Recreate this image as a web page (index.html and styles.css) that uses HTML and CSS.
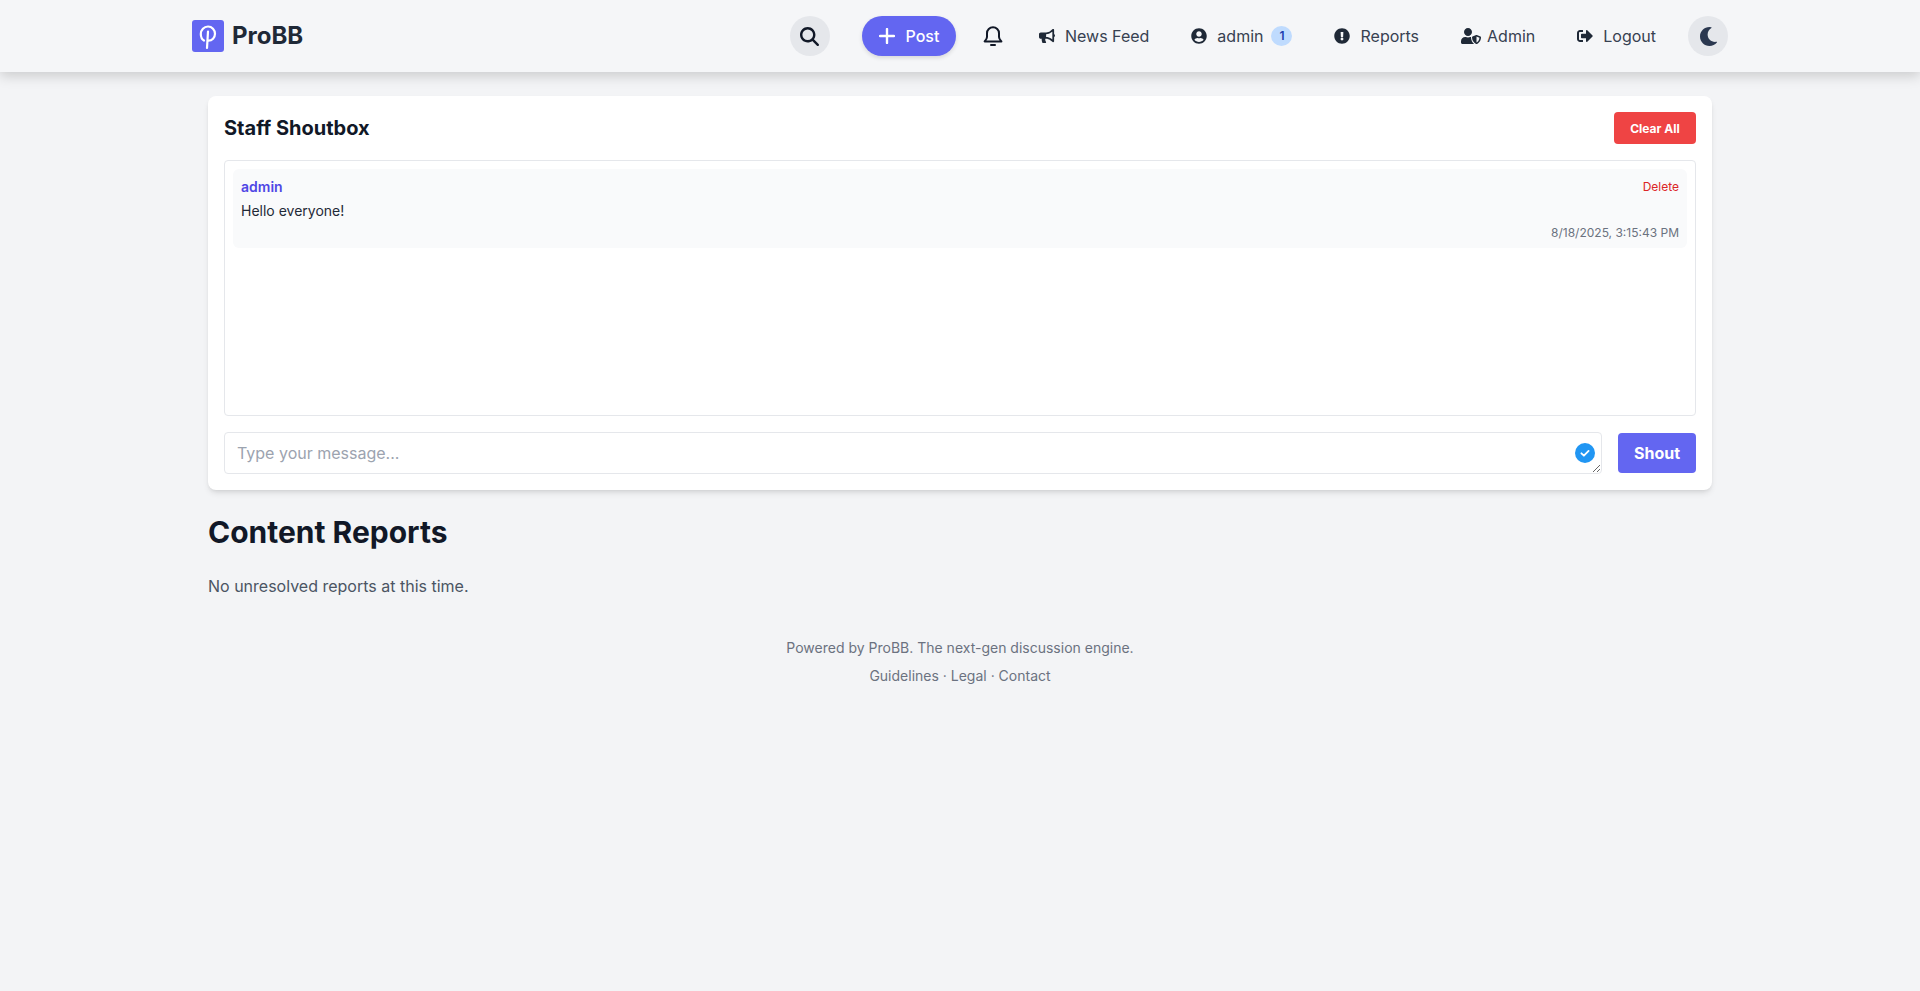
FILE: index.html
```html
<!DOCTYPE html>
<html lang="en">
<head>
<meta charset="utf-8">
<title>ProBB</title>
<link rel="stylesheet" href="styles.css">
</head>
<body>
<header class="site-header">
  <div class="header-inner">
    <a class="brand" href="#">
      <svg class="brand-mark" viewBox="0 0 32 32"><rect width="32" height="32" rx="3" fill="#6366f1"/><path d="M12 20.5C9.8 19.3 8.8 16.8 8.8 14C8.8 9.8 12 6.5 16 6.5C20 6.5 23 9.8 23 13.8C23 17.8 20 20.6 16.5 20.6M16 11.5L15 28" fill="none" stroke="#fff" stroke-width="2.2" stroke-linecap="round"/></svg>
      <span class="brand-name">ProBB</span>
    </a>
    <nav class="nav">
      <button class="round-btn search-btn"><svg class="ico-search" viewBox="0 0 512 512"><path d="M416 208c0 45.9-14.9 88.3-40 122.7L502.6 457.4c12.5 12.5 12.5 32.8 0 45.3s-32.8 12.5-45.3 0L330.7 376c-34.4 25.2-76.8 40-122.7 40C93.1 416 0 322.9 0 208S93.1 0 208 0S416 93.1 416 208zM208 352a144 144 0 1 0 0-288 144 144 0 1 0 0 288z"/></svg></button>
      <a class="post-btn" href="#"><svg class="ico-plus" viewBox="0 0 16 16"><path d="M8 1V15M1 8H15" stroke="#fff" stroke-width="2.4" stroke-linecap="round" fill="none"/></svg>Post</a>
      <a class="bell" href="#"><svg viewBox="0 0 24 24" fill="none" stroke="#111827" stroke-width="2" stroke-linecap="round" stroke-linejoin="round"><path d="M12 3.2A6 6 0 0 0 6 9.2V13C6 14.8 5 16 3.6 17.4H20.4C19 16 18 14.8 18 13V9.2A6 6 0 0 0 12 3.2Z"/><path d="M10 21H14"/></svg></a>
      <a class="nav-link" href="#"><svg class="ico" viewBox="0 0 576 512"><path d="M576 240c0-23.63-12.95-44.04-32-55.12V32.01C544 23.26 537.02 0 512 0c-7.12 0-14.19 2.38-19.98 7.02l-85.03 68.03C364.28 109.19 310.66 128 256 128H64c-35.35 0-64 28.65-64 64v96c0 35.35 28.65 64 64 64h33.7c-1.39 10.48-2.18 21.14-2.18 32 0 39.77 9.26 77.35 25.56 110.94 5.19 10.69 16.52 17.06 28.4 17.06h74.28c26.05 0 41.69-29.84 25.9-50.56-16.4-21.52-26.15-48.36-26.15-77.44 0-11.11 1.62-21.79 4.41-32H256c54.66 0 108.28 18.81 150.98 52.95l85.03 68.03a32.023 32.023 0 0 0 19.98 7.02c24.92 0 32-22.78 32-32V295.13C563.05 284.04 576 263.63 576 240zm-96 141.42l-33.05-26.44C392.95 311.78 325.12 288 256 288v-96c69.12 0 136.95-23.78 190.95-66.98L480 98.58v282.84z"/></svg>News Feed</a>
      <a class="nav-link" href="#"><svg class="ico" viewBox="0 0 496 512"><path d="M248 8C111 8 0 119 0 256s111 248 248 248 248-111 248-248S385 8 248 8zm0 96c48.6 0 88 39.4 88 88s-39.4 88-88 88-88-39.4-88-88 39.4-88 88-88zm0 344c-58.7 0-111.3-26.6-146.5-68.2 18.8-35.4 55.6-59.8 98.5-59.8 2.4 0 4.8.4 7.1 1.1 13 4.2 26.6 6.9 40.9 6.9 14.3 0 28-2.7 40.9-6.9 2.3-.7 4.7-1.1 7.1-1.1 42.9 0 79.7 24.4 98.5 59.8C359.3 421.4 306.7 448 248 448z"/></svg>admin<span class="badge">1</span></a>
      <a class="nav-link" href="#"><svg class="ico" viewBox="0 0 512 512"><path d="M504 256c0 136.997-111.043 248-248 248S8 392.997 8 256C8 119.083 119.043 8 256 8s248 111.083 248 248zm-248 50c-25.405 0-46 20.595-46 46s20.595 46 46 46 46-20.595 46-46-20.595-46-46-46zm-43.673-165.346l7.418 136c.347 6.364 5.609 11.346 11.982 11.346h48.546c6.373 0 11.635-4.982 11.982-11.346l7.418-136c.375-6.874-5.098-12.654-11.982-12.654h-63.383c-6.884 0-12.356 5.78-11.981 12.654z"/></svg>Reports</a>
      <a class="nav-link" href="#"><svg class="ico ico-wide" viewBox="0 0 640 512"><path d="M622.3 271.1l-115.2-45c-4.1-1.6-12.6-3.7-22.2 0l-115.2 45c-10.7 4.2-17.7 14-17.7 24.9 0 111.6 68.7 188.8 132.9 213.9 9.6 3.7 18 1.6 22.2 0C558.4 489.9 640 420.5 640 296c0-10.9-7-20.7-17.7-24.9zM496 462.4V273.3l95.5 37.3c-5.6 87.1-60.9 135.4-95.5 151.8zM224 256c70.7 0 128-57.3 128-128S294.7 0 224 0 96 57.3 96 128s57.3 128 128 128zm96 40c0-2.5.8-4.8 1.1-7.2-2.5-.1-4.9-.8-7.5-.8h-16.7c-22.2 10.2-46.9 16-72.9 16s-50.6-5.8-72.9-16h-16.7C60.2 288 0 348.2 0 422.4V464c0 26.5 21.5 48 48 48h352c6.8 0 13.3-1.5 19.2-4-54-42.9-99.2-116.7-99.2-212z"/></svg>Admin</a>
      <a class="nav-link" href="#"><svg class="ico" viewBox="0 0 512 512"><path d="M497 273L329 441c-15 15-41 4.5-41-17v-96H152c-13.3 0-24-10.7-24-24v-96c0-13.3 10.7-24 24-24h136V88c0-21.4 25.9-32 41-17l168 168c9.3 9.4 9.3 24.6 0 34zM192 436v-40c0-6.6-5.4-12-12-12H96c-17.7 0-32-14.3-32-32V160c0-17.7 14.3-32 32-32h84c6.6 0 12-5.4 12-12V76c0-6.6-5.4-12-12-12H96c-53 0-96 43-96 96v192c0 53 43 96 96 96h84c6.6 0 12-5.4 12-12z"/></svg>Logout</a>
      <button class="round-btn moon-btn"><svg class="ico-moon" viewBox="0 0 512 512"><path d="M283.211 512c78.962 0 151.079-35.925 198.857-94.792 7.068-8.708-.639-21.43-11.562-19.35-124.203 23.654-238.262-71.576-238.262-196.954 0-72.222 38.662-138.635 101.498-174.394 9.686-5.512 7.25-20.197-3.756-22.23A258.156 258.156 0 0 0 283.211 0c-141.309 0-256 114.511-256 256 0 141.309 114.511 256 256 256z"/></svg></button>
    </nav>
  </div>
</header>
<main class="main">
  <section class="card">
    <div class="card-head">
      <h2 class="card-title">Staff Shoutbox</h2>
      <button class="clear-btn">Clear All</button>
    </div>
    <div class="log">
      <article class="msg">
        <div class="msg-top"><span class="msg-user">admin</span><a class="msg-del" href="#">Delete</a></div>
        <p class="msg-text">Hello everyone!</p>
        <div class="msg-time">8/18/2025, 3:15:43 PM</div>
      </article>
    </div>
    <form class="shout-form">
      <div class="input-wrap">
        <textarea class="shout-input" rows="1" placeholder="Type your message..."></textarea>
        <span class="grammar"><svg viewBox="0 0 20 20"><circle cx="10" cy="10" r="10" fill="#2196f3"/><path d="M6.4 10.3L8.9 12.7L13.6 7.9" fill="none" stroke="#fff" stroke-width="1.8" stroke-linecap="round" stroke-linejoin="round"/></svg></span>
      </div>
      <button class="shout-btn" type="button">Shout</button>
    </form>
  </section>
  <h1 class="page-title">Content Reports</h1>
  <p class="empty">No unresolved reports at this time.</p>
</main>
<footer class="footer">
  <p class="footer-line">Powered by ProBB. The next-gen discussion engine.</p>
  <p class="footer-line"><a href="#">Guidelines</a> · <a href="#">Legal</a> · <a href="#">Contact</a></p>
</footer>
</body>
</html>
```
FILE: styles.css
```css
* { box-sizing: border-box; }
html, body { margin: 0; padding: 0; }
body { background: #f3f4f6; font-family: Inter, "Liberation Sans", sans-serif; color: #1f2937; min-height: 991px; }
a { color: inherit; text-decoration: none; }
button { font-family: inherit; border: 0; cursor: pointer; }
h1, h2, p { margin: 0; }

.site-header { height: 72px; background: #f5f6f8; box-shadow: 0 4px 12px rgba(0,0,0,.17); }
.header-inner { width: 1536px; height: 72px; margin: 0 auto; display: flex; align-items: center; justify-content: space-between; }
.brand { display: flex; align-items: center; gap: 8px; }
.brand-mark { width: 32px; height: 32px; display: block; }
.brand-name { font-size: 24px; font-weight: 700; line-height: 32px; color: #1f2937; }

.nav { display: flex; align-items: center; }
.round-btn { width: 40px; height: 40px; border-radius: 50%; background: #e5e7eb; display: flex; align-items: center; justify-content: center; padding: 0; }
.search-btn { margin-right: 32px; }
.ico-search { width: 19px; height: 19px; fill: #111827; }
.ico-moon { width: 19px; height: 19px; fill: #2b3850; }
.post-btn { width: 94px; height: 40px; border-radius: 20px; background: #6366f1; color: #fff; font-weight: 500; font-size: 16px; display: flex; align-items: center; justify-content: center; gap: 11px; box-shadow: 0 2px 4px rgba(0,0,0,.12); }
.ico-plus { width: 16px; height: 16px; }
.bell { width: 24px; height: 24px; margin: 0 34px 0 25px; }
.bell svg { width: 24px; height: 24px; display: block; }
.nav-link { display: flex; align-items: center; font-size: 16px; line-height: 24px; color: #374151; margin-right: 42px; }
.nav-link:nth-last-of-type(1) { margin-right: 32px; }
.ico { width: 16px; height: 16px; fill: #1f2937; margin-right: 10px; }
.ico-wide { width: 20px; margin-right: 6px; }
.badge { width: 21px; height: 20px; border-radius: 50%; background: #bfdbfe; color: #1e40af; font-size: 12px; font-weight: 600; display: flex; align-items: center; justify-content: center; margin-left: 8px; }

.main { width: 1504px; margin: 24px auto 0; }
.card { height: 394px; background: #fff; border-radius: 8px; padding: 16px; box-shadow: 0 4px 6px -1px rgba(0,0,0,.1), 0 2px 4px -2px rgba(0,0,0,.1); }
.card-head { height: 32px; display: flex; align-items: center; justify-content: space-between; margin-bottom: 16px; }
.card-title { font-size: 20px; line-height: 28px; font-weight: 700; color: #111827; }
.clear-btn { width: 82px; height: 32px; border-radius: 4px; background: #ef4444; color: #fff; font-size: 12px; font-weight: 700; padding: 0; }
.log { height: 256px; border: 1px solid #e5e7eb; border-radius: 4px; padding: 8px; margin-bottom: 16px; }
.msg { height: 79px; background: #f9fafb; border-radius: 6px; padding: 8px; }
.msg-top { display: flex; justify-content: space-between; align-items: center; height: 18px; }
.msg-user { font-size: 14px; font-weight: 600; color: #4f46e5; }
.msg-del { font-size: 12px; color: #dc2626; }
.msg-text { font-size: 14px; line-height: 20px; color: #1f2937; margin-top: 6px; }
.msg-time { font-size: 12px; line-height: 16px; color: #6b7280; text-align: right; margin-top: 4px; }

.shout-form { display: flex; align-items: center; gap: 16px; }
.input-wrap { position: relative; flex: 1; height: 42px; }
.shout-input { display: block; width: 100%; height: 42px; border: 1px solid #e5e7eb; border-radius: 4px; padding: 8px 12px; font-family: inherit; font-size: 16px; line-height: 24px; background: #fff; color: #111827; outline: 0; }
.shout-input::placeholder { color: #9ca3af; opacity: 1; }
.grammar { position: absolute; right: 7px; top: 11px; width: 20px; height: 20px; }
.grammar svg { display: block; width: 20px; height: 20px; }
.shout-btn { width: 78px; height: 40px; border-radius: 4px; background: #6366f1; color: #fff; font-size: 16px; font-weight: 700; padding: 0; }

.page-title { font-size: 30px; line-height: 36px; font-weight: 700; color: #111827; margin-top: 24px; }
.empty { font-size: 16px; line-height: 24px; color: #4b5563; margin-top: 24px; }
.footer { margin-top: 40px; text-align: center; font-size: 14px; color: #6b7280; }
.footer-line { line-height: 20px; margin-bottom: 8px; }
```
